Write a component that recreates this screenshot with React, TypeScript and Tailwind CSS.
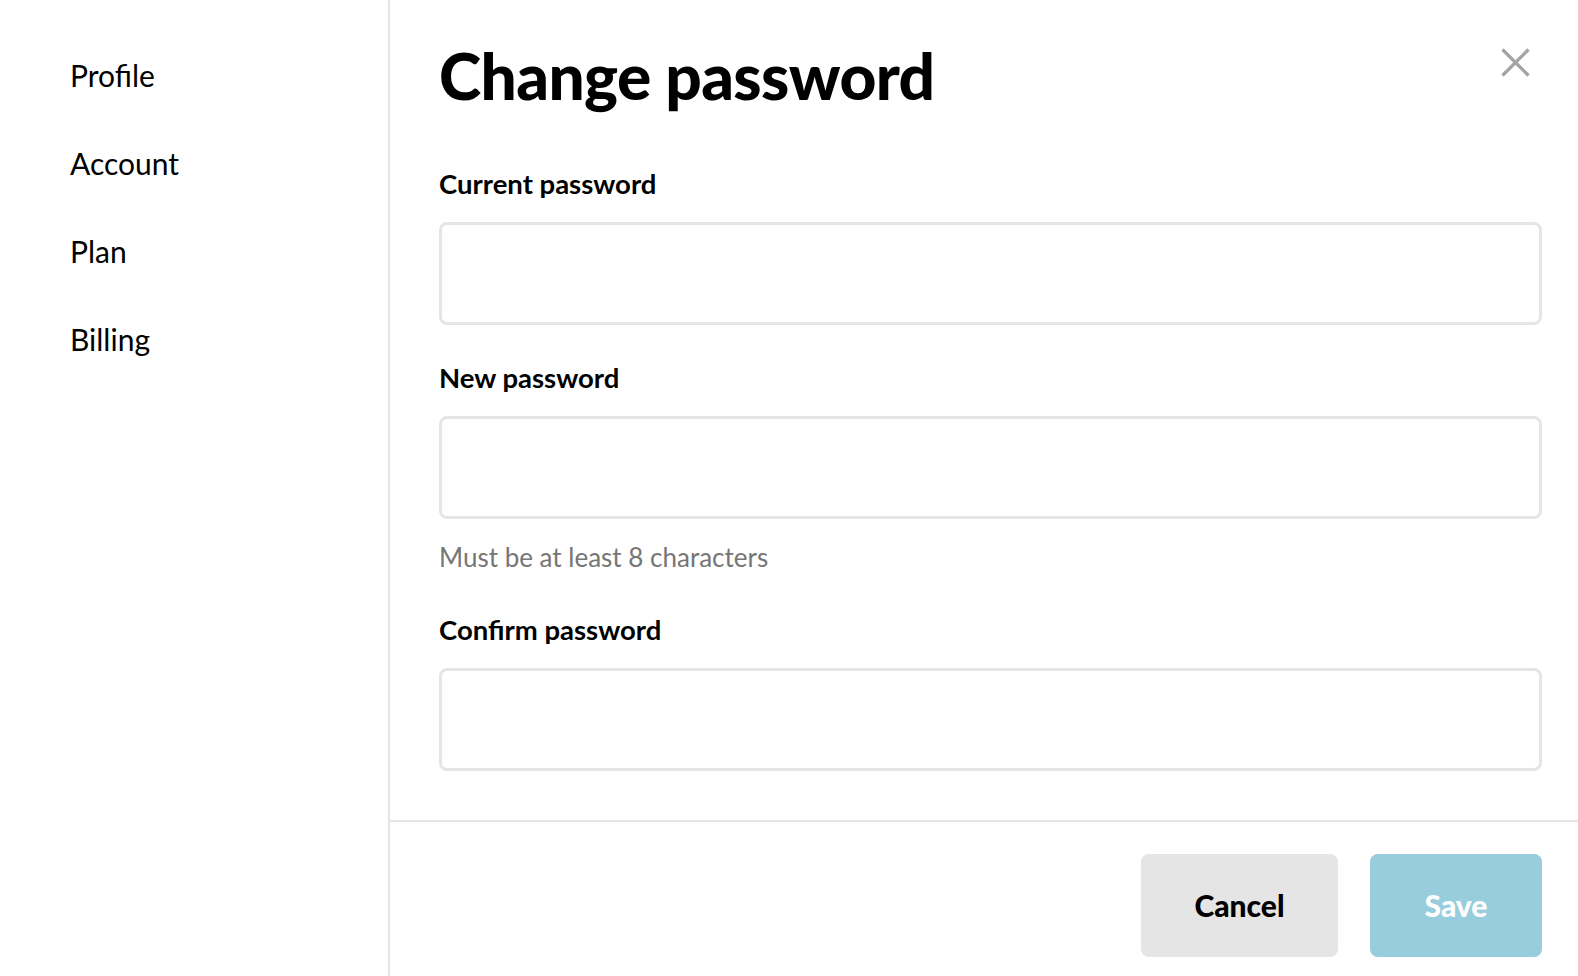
import React from 'react';

const navItems = ['Profile', 'Account', 'Plan', 'Billing'];

const Field: React.FC<{ label: string; hint?: string; className?: string }> = ({ label, hint, className }) => (
  <div className={className}>
    <label className="block text-[27.5px] font-bold leading-[32px] text-black">{label}</label>
    <input
      type="password"
      className="mt-[22px] block h-[103px] w-full rounded-[8px] border-[3px] border-[#e5e5e5] bg-white px-4 text-[26px] outline-none"
    />
    {hint && <p className="mt-[22px] text-[26px] leading-[32px] text-[#767676]">{hint}</p>}
  </div>
);

export default function App() {
  return (
    <div className="flex h-[976px] w-full overflow-hidden bg-white font-['Lato',sans-serif] text-black">
      <aside className="w-[390px] shrink-0 border-r-2 border-[#e5e5e5] pl-[70px] pt-[55px]">
        <nav className="flex flex-col gap-[48px]">
          {navItems.map((item) => (
            <a key={item} href="#" className="text-[30px] leading-[40px] text-black">
              {item}
            </a>
          ))}
        </nav>
      </aside>

      <main className="flex flex-1 flex-col">
        <div className="pl-[49px] pr-[36px]">
          <div className="flex items-start justify-between pt-[38px]">
            <h1 className="text-[64px] font-black leading-[76px] tracking-[-0.6px]">Change password</h1>
            <button className="mr-[12px] mt-[10px] text-[#a3a3a3]" aria-label="Close">
              <svg width="29" height="29" viewBox="0 0 29 29" fill="none" stroke="currentColor" strokeWidth="3.2">
                <path d="M1.5 1.5 27.5 27.5M27.5 1.5 1.5 27.5" />
              </svg>
            </button>
          </div>

          <Field label="Current password" className="mt-[54px]" />
          <Field label="New password" hint="Must be at least 8 characters" className="mt-[37px]" />
          <Field label="Confirm password" className="mt-[41px]" />
        </div>

        <div className="mt-[49px] flex justify-end gap-[32px] border-t-2 border-[#e5e5e5] pr-[36px] pt-[32px]">
          <button className="h-[103px] w-[197px] rounded-[8px] bg-[#e5e5e5] text-[30px] font-black text-black">
            Cancel
          </button>
          <button className="h-[103px] w-[172px] rounded-[8px] bg-[#98cddd] text-[30px] font-black text-white">
            Save
          </button>
        </div>
      </main>
    </div>
  );
}
